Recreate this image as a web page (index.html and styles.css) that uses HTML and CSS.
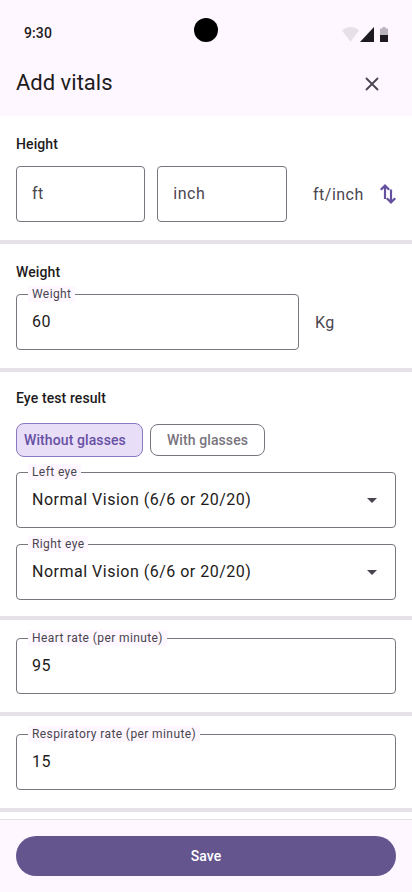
FILE: index.html
```html
<!DOCTYPE html>
<html lang="en">
<head>
<meta charset="utf-8">
<title>Add vitals</title>
<link rel="stylesheet" href="styles.css">
</head>
<body>
<div class="app">
  <header class="header">
    <div class="status">
      <span class="time">9:30</span>
      <span class="camera"></span>
      <span class="status-icons">
        <svg class="wifi" width="17" height="15" viewBox="0 0 17 15"><path d="M0 3.400C2.200 1.300 5.200 0 8.500 0S14.800 1.300 17 3.400L8.500 14.700z" fill="#e6e0e9"/></svg>
        <svg class="signal" width="14" height="15" viewBox="0 0 14 15"><path d="M14 0v15H0z" fill="#1d1b20"/></svg>
        <svg class="battery" width="8" height="15" viewBox="0 0 8 15"><path d="M2.500 0h3v1.500H8V15H0V1.500h2.500z" fill="#b9b4bd"/><rect y="8" width="8" height="7" fill="#1d1b20"/></svg>
      </span>
    </div>
    <div class="titlebar">
      <h1 class="title">Add vitals</h1>
      <svg class="close" width="14" height="14" viewBox="0 0 14 14"><path d="M1 1l12 12M13 1L1 13" stroke="#49454f" stroke-width="1.800" fill="none"/></svg>
    </div>
  </header>

  <main class="content">
    <section class="section">
      <h2 class="heading">Height</h2>
      <div class="row row-height">
        <div class="field field-small"><span class="placeholder">ft</span></div>
        <div class="field field-small"><span class="placeholder">inch</span></div>
        <span class="unit unit-toggle">ft/inch</span>
        <svg class="swap" width="16" height="20" viewBox="0 0 16 20"><path d="M5 15V1.600M.8 5.800L5 1.600l4.200 4.200M11 5.500v12.900M6.800 14.200l4.200 4.200 4.200-4.200" stroke="#65509f" stroke-width="2.200" fill="none"/></svg>
      </div>
    </section>

    <section class="section">
      <h2 class="heading">Weight</h2>
      <div class="row row-weight">
        <div class="field field-weight">
          <span class="float">Weight</span>
          <span class="value">60</span>
        </div>
        <span class="unit">Kg</span>
      </div>
    </section>

    <section class="section section-eye">
      <h2 class="heading heading-eye">Eye test result</h2>
      <div class="chips">
        <span class="chip chip-on">Without glasses</span>
        <span class="chip">With glasses</span>
      </div>
      <div class="field select">
        <span class="float">Left eye</span>
        <span class="value">Normal Vision (6/6 or 20/20)</span>
        <span class="caret"></span>
      </div>
      <div class="field select">
        <span class="float">Right eye</span>
        <span class="value">Normal Vision (6/6 or 20/20)</span>
        <span class="caret"></span>
      </div>
    </section>

    <section class="section section-plain">
      <div class="field">
        <span class="float">Heart rate (per minute)</span>
        <span class="value">95</span>
      </div>
    </section>

    <section class="section section-plain">
      <div class="field">
        <span class="float">Respiratory rate (per minute)</span>
        <span class="value">15</span>
      </div>
    </section>
  </main>

  <footer class="footer">
    <button class="save" type="button">Save</button>
  </footer>
</div>
</body>
</html>
```

FILE: styles.css
```css
* { box-sizing: border-box; }

html, body {
  margin: 0;
  padding: 0;
  background: #fff;
}

body {
  font-family: Roboto, "Noto Sans", sans-serif;
  color: #1d1b20;
}

.app {
  width: 412px;
  height: 892px;
  display: flex;
  flex-direction: column;
  overflow: hidden;
}

.header {
  height: 116px;
  flex: none;
  background: #fef7ff;
  display: flex;
  flex-direction: column;
}

.status {
  position: relative;
  height: 52px;
  padding: 14px 24px 0 24px;
  display: flex;
  justify-content: space-between;
  align-items: center;
}

.time {
  font-size: 14px;
  font-weight: 500;
  letter-spacing: .1px;
  line-height: 32px;
}

.camera {
  position: absolute;
  left: 194px;
  top: 18px;
  width: 24px;
  height: 24px;
  border-radius: 50%;
  background: #000;
}

.status-icons {
  display: flex;
  align-items: flex-start;
  gap: 1px;
  height: 15px;
  margin-top: 3px;
}

.battery { margin-left: 5px; }

.titlebar {
  display: flex;
  align-items: center;
  justify-content: space-between;
  padding: 0 33px 0 16px;
  height: 62px;
}

.title {
  margin: 0;
  font-size: 22px;
  line-height: 28px;
  font-weight: 400;
}

.close { margin-top: 2px; }

.content {
  flex: 1;
  min-height: 0;
  background: #fff;
}

.section {
  padding: 18px 16px 18px;
  border-bottom: 4px solid #e6e0e9;
}

.heading {
  margin: 0 0 12px;
  font-size: 14px;
  line-height: 20px;
  font-weight: 500;
  letter-spacing: .1px;
}

.heading-eye { margin-bottom: 16px; }

.row {
  display: flex;
  align-items: center;
}

.field {
  position: relative;
  height: 56px;
  border: 1px solid #79747e;
  border-radius: 4px;
  padding: 0 15px 2px;
  display: flex;
  align-items: center;
}

.field-small {
  width: 129.330px;
  flex: none;
  margin-right: 12px;
}

.field-small + .field-small { margin-right: 0; }

.field-weight {
  width: 283px;
  flex: none;
}

.placeholder {
  font-size: 16px;
  letter-spacing: .5px;
  color: #49454f;
}

.value {
  font-size: 16px;
  letter-spacing: .5px;
  color: #1d1b20;
}

.unit {
  font-size: 16px;
  letter-spacing: .5px;
  color: #49454f;
  margin-left: 16px;
}

.unit-toggle {
  margin-left: 26.340px;
  flex: 1;
}

.swap { margin-top: -1px; }

.float {
  position: absolute;
  left: 11px;
  top: -9px;
  height: 16px;
  padding: 0 4px;
  font-size: 12px;
  line-height: 16px;
  letter-spacing: .4px;
  color: #49454f;
  background: #fef7ff;
}

.section-eye { padding: 16px 16px; }

.chips {
  display: flex;
  align-items: center;
  gap: 7px;
  height: 32px;
  margin-bottom: 16px;
}

.chip {
  height: 32px;
  padding: 0 16px;
  display: flex;
  align-items: center;
  border: 1px solid #79747e;
  border-radius: 8px;
  font-size: 14px;
  font-weight: 500;
  letter-spacing: .1px;
  color: #79747e;
}

.chip-on {
  height: 34px;
  padding: 0 16px 0 7px;
  background: #e8def8;
  border-color: #8a78c0;
  color: #6750a4;
}

.select { margin-bottom: 16px; }
.select:last-child { margin-bottom: 0; }

.caret {
  position: absolute;
  right: 18px;
  top: 25px;
  width: 0;
  height: 0;
  border-left: 5px solid transparent;
  border-right: 5px solid transparent;
  border-top: 5px solid #49454f;
}

.section-plain { padding: 18px 16px; }

.footer {
  height: 73px;
  flex: none;
  margin-top: 7px;
  padding: 16px 16px 0;
  background: #fef7ff;
  border-top: 1px solid #e6e0e9;
}

.save {
  display: block;
  width: 100%;
  height: 40px;
  border: 0;
  border-radius: 20px;
  background: #65558f;
  color: #fff;
  font-family: Roboto, "Noto Sans", sans-serif;
  font-size: 14px;
  font-weight: 500;
  letter-spacing: .1px;
}
```
